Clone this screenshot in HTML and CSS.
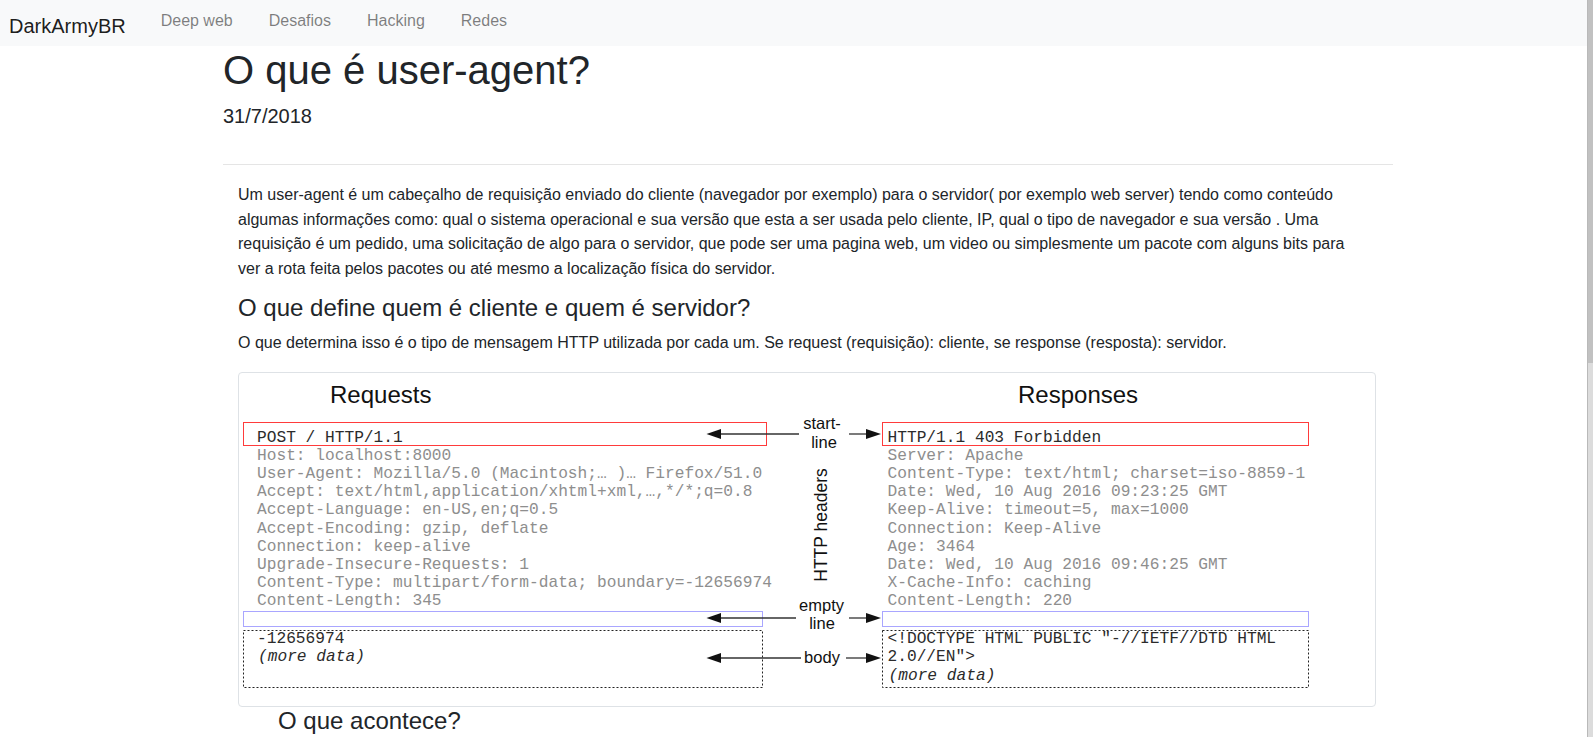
FILE: index.html
```html
<!DOCTYPE html>
<html lang="pt-BR">
<head>
<meta charset="utf-8">
<title>O que é user-agent? - DarkArmyBR</title>
<link rel="stylesheet" href="styles.css">
</head>
<body>
<div class="page">
  <nav class="navbar">
    <a class="brand" href="#">DarkArmyBR</a>
    <ul class="nav">
      <li><a class="nav-link" href="#">Deep web</a></li>
      <li><a class="nav-link" href="#">Desafios</a></li>
      <li><a class="nav-link" href="#">Hacking</a></li>
      <li><a class="nav-link" href="#">Redes</a></li>
    </ul>
  </nav>
  <main class="container">
    <h1 class="title">O que é user-agent?</h1>
    <p class="date">31/7/2018</p>
    <hr class="divider">
    <article class="post">
      <p class="intro">Um user-agent é um cabeçalho de requisição enviado do cliente (navegador por exemplo) para o servidor( por exemplo web server) tendo como conteúdo algumas informações como: qual o sistema operacional e sua versão que esta a ser usada pelo cliente, IP, qual o tipo de navegador e sua versão . Uma requisição é um pedido, uma solicitação de algo para o servidor, que pode ser uma pagina web, um video ou simplesmente um pacote com alguns bits para ver a rota feita pelos pacotes ou até mesmo a localização física do servidor.</p>
      <h2>O que define quem é cliente e quem é servidor?</h2>
      <p class="answer">O que determina isso é o tipo de mensagem HTTP utilizada por cada um. Se request (requisição): cliente, se response (resposta): servidor.</p>
      <figure class="thumb">
        <svg class="diagram" width="1128" height="325" viewBox="243 377 1128 325" xmlns="http://www.w3.org/2000/svg">
          <text class="dg-title" x="330" y="403">Requests</text>
          <text class="dg-title" x="1018" y="403">Responses</text>

          <rect class="box-red" x="243.5" y="422.5" width="523" height="23"/>
          <rect class="box-red" x="882.5" y="422.5" width="426" height="23"/>
          <rect class="box-blue" x="243.5" y="611.5" width="519" height="15"/>
          <rect class="box-blue" x="882.5" y="611.5" width="426" height="15"/>
          <rect class="box-dot" x="243.5" y="630.5" width="519" height="57"/>
          <rect class="box-dot" x="882.5" y="630.5" width="426" height="57"/>

          <g class="dg-mono">
            <text class="dg-dark" x="257" y="441.5">POST / HTTP/1.1</text>
            <text class="dg-light" x="257" y="459.7">Host: localhost:8000</text>
            <text class="dg-light" x="257" y="477.9">User-Agent: Mozilla/5.0 (Macintosh;… )… Firefox/51.0</text>
            <text class="dg-light" x="257" y="496.1">Accept: text/html,application/xhtml+xml,…,*/*;q=0.8</text>
            <text class="dg-light" x="257" y="514.3">Accept-Language: en-US,en;q=0.5</text>
            <text class="dg-light" x="257" y="532.5">Accept-Encoding: gzip, deflate</text>
            <text class="dg-light" x="257" y="550.7">Connection: keep-alive</text>
            <text class="dg-light" x="257" y="568.9">Upgrade-Insecure-Requests: 1</text>
            <text class="dg-light" x="257" y="587.1">Content-Type: multipart/form-data; boundary=-12656974</text>
            <text class="dg-light" x="257" y="605.3">Content-Length: 345</text>
            <text class="dg-dark" x="257" y="643">-12656974</text>
            <text class="dg-dark dg-italic" x="258" y="661">(more data)</text>

            <text class="dg-dark" x="887.5" y="441.5">HTTP/1.1 403 Forbidden</text>
            <text class="dg-light" x="887.5" y="459.7">Server: Apache</text>
            <text class="dg-light" x="887.5" y="477.9">Content-Type: text/html; charset=iso-8859-1</text>
            <text class="dg-light" x="887.5" y="496.1">Date: Wed, 10 Aug 2016 09:23:25 GMT</text>
            <text class="dg-light" x="887.5" y="514.3">Keep-Alive: timeout=5, max=1000</text>
            <text class="dg-light" x="887.5" y="532.5">Connection: Keep-Alive</text>
            <text class="dg-light" x="887.5" y="550.7">Age: 3464</text>
            <text class="dg-light" x="887.5" y="568.9">Date: Wed, 10 Aug 2016 09:46:25 GMT</text>
            <text class="dg-light" x="887.5" y="587.1">X-Cache-Info: caching</text>
            <text class="dg-light" x="887.5" y="605.3">Content-Length: 220</text>
            <text class="dg-dark" x="887.5" y="643">&lt;!DOCTYPE HTML PUBLIC "-//IETF//DTD HTML</text>
            <text class="dg-dark" x="887.5" y="661">2.0//EN"&gt;</text>
            <text class="dg-dark dg-italic" x="888.5" y="680">(more data)</text>
          </g>

          <text class="dg-label" x="822" y="429">start-</text>
          <text class="dg-label" x="824" y="448">line</text>
          <text class="dg-label dg-rot" x="827" y="525" transform="rotate(-90 827 525)">HTTP headers</text>
          <text class="dg-label" x="821.5" y="611">empty</text>
          <text class="dg-label" x="822" y="629">line</text>
          <text class="dg-label" x="822" y="663">body</text>

          <line class="arrow-line" x1="718" y1="434" x2="799" y2="434"/>
          <polygon class="arrow-head" points="706.5,434 721,429 721,439"/>
          <line class="arrow-line" x1="849" y1="434" x2="868" y2="434"/>
          <polygon class="arrow-head" points="881,434 866,429 866,439"/>

          <line class="arrow-line" x1="718" y1="618" x2="796" y2="618"/>
          <polygon class="arrow-head" points="706.5,618 721,613 721,623"/>
          <line class="arrow-line" x1="849" y1="618" x2="868" y2="618"/>
          <polygon class="arrow-head" points="881,618 866,613 866,623"/>

          <line class="arrow-line" x1="718" y1="658" x2="801" y2="658"/>
          <polygon class="arrow-head" points="706.5,658 721,653 721,663"/>
          <line class="arrow-line" x1="846" y1="658" x2="868" y2="658"/>
          <polygon class="arrow-head" points="881,658 866,653 866,663"/>
        </svg>
      </figure>
      <h2 class="subhead">O que acontece?</h2>
    </article>
  </main>
</div>
<div class="scrollbar"><div class="scrollbar-thumb"></div></div>
</body>
</html>
```
FILE: styles.css
```css
html, body {
  margin: 0;
  height: 100%;
  overflow: hidden;
}

body {
  font-family: "Liberation Sans", Arial, sans-serif;
  color: #212529;
  background: #fff;
}

.page {
  width: calc(100% - 6px);
}

/* Navbar */
.navbar {
  height: 46px;
  background: #f8f9fa;
  display: flex;
  align-items: flex-start;
  padding-left: 9px;
  box-sizing: border-box;
}

.brand {
  font-size: 20px;
  line-height: 30px;
  margin-top: 11px;
  margin-right: 17px;
  color: rgba(0, 0, 0, 0.9);
  text-decoration: none;
}

.nav {
  display: flex;
  list-style: none;
  margin: 9px 0 0;
  padding: 0;
}

.nav-link {
  display: block;
  padding: 0 18px;
  font-size: 16px;
  line-height: 24px;
  color: rgba(0, 0, 0, 0.5);
  text-decoration: none;
}

/* Main */
.container {
  margin-left: 223px;
  width: 1170px;
}

.title {
  font-size: 40px;
  font-weight: normal;
  line-height: 1.2;
  margin: 0 0 7px;
}

.date {
  font-size: 20px;
  line-height: 30px;
  margin: 0 0 33px;
}

.divider {
  border: 0;
  border-top: 1px solid rgba(0, 0, 0, 0.1);
  margin: 0 0 18px;
}

.post {
  padding-left: 15px;
}

.post p {
  font-size: 16px;
  line-height: 24.6px;
  margin: 0;
  width: 1122px;
}

.post p.intro {
  margin-bottom: 12.6px;
}

.post p.answer {
  margin-bottom: 16.5px;
}

.post h2 {
  font-size: 24px;
  font-weight: normal;
  line-height: 1.2;
  margin: 0 0 8px;
}

.post h2.subhead {
  margin: 0;
  padding-left: 40px;
}

.thumb {
  margin: 0;
  width: 1128px;
  padding: 4px;
  border: 1px solid #dee2e6;
  border-radius: 4px;
  background: #fff;
}

.diagram {
  display: block;
}

/* Diagram */
.dg-title {
  font-family: "Liberation Sans", Arial, sans-serif;
  font-size: 24px;
  fill: #111;
}

.dg-mono {
  font-family: "Liberation Mono", "Courier New", monospace;
  font-size: 16.2px;
  white-space: pre;
}

.dg-dark {
  fill: #2b2b2b;
}

.dg-light {
  fill: #8e8e8e;
}

.dg-italic {
  font-style: italic;
}

.dg-label {
  font-family: "Liberation Sans", Arial, sans-serif;
  font-size: 16.5px;
  fill: #111;
  text-anchor: middle;
}

.dg-rot {
  font-size: 17.5px;
}

.box-red {
  fill: none;
  stroke: #ff3b3b;
  stroke-width: 1;
}

.box-blue {
  fill: none;
  stroke: #a9a6ff;
  stroke-width: 1;
}

.box-dot {
  fill: none;
  stroke: #222;
  stroke-width: 1;
  stroke-dasharray: 2 2;
}

.arrow-line {
  stroke: #333;
  stroke-width: 1.3;
}

.arrow-head {
  fill: #111;
}

/* Scrollbar overlay */
.scrollbar {
  position: fixed;
  top: 0;
  right: 0;
  width: 5px;
  height: 100%;
  background: #dcdcdc;
  border-left: 1px solid #b9b9b9;
}

.scrollbar-thumb {
  height: 363px;
  background: #c1c1c1;
}
```
